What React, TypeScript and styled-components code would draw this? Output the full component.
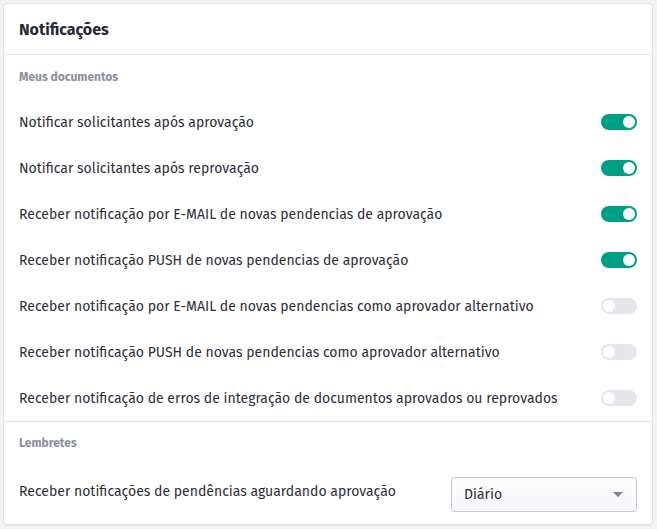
import React from 'react'
import styled, { createGlobalStyle } from 'styled-components'

const GlobalStyle = createGlobalStyle`
  html, body {
    margin: 0;
    padding: 0;
    background: #f3f3f5;
  }
  body {
    font-family: 'Fira Sans', 'Roboto', 'Liberation Sans', sans-serif;
    color: #2e2e3a;
  }
`

const Page = styled.div`
  padding: 3px 4px 4px 3px;
`

const Card = styled.div`
  background: #ffffff;
  border: 1px solid #e3e3e8;
  border-radius: 4px;
  box-shadow: 0 1px 2px rgba(20, 20, 40, 0.06);
  overflow: hidden;
`

const Header = styled.div`
  height: 50px;
  display: flex;
  align-items: center;
  padding: 0 15px;
  border-bottom: 1px solid #e3e3e8;
`

const Title = styled.h1`
  margin: 0;
  font-size: 16px;
  font-weight: 700;
  color: #2a2a38;
`

const Section = styled.div<{ $last?: boolean }>`
  padding: 14px 15px ${p => (p.$last ? '7px' : '0')};
  & + & {
    border-top: 1px solid #e3e3e8;
    padding-top: 13px;
  }
`

const SectionLabel = styled.div`
  font-size: 12px;
  line-height: 16px;
  font-weight: 700;
  color: #8c90a3;
  margin-bottom: 14px;
`

const Row = styled.div<{ $tall?: boolean }>`
  height: ${p => (p.$tall ? '52px' : '46px')};
  display: flex;
  align-items: center;
  justify-content: space-between;
`

const RowText = styled.span`
  font-size: 14px;
  color: #2e2e3a;
`

const Toggle = styled.button<{ $on: boolean }>`
  position: relative;
  width: 36px;
  height: 16px;
  border: none;
  padding: 0;
  border-radius: 8px;
  cursor: pointer;
  background: ${p => (p.$on ? '#009e85' : '#e6e6ec')};
  &::after {
    content: '';
    position: absolute;
    top: 2px;
    left: ${p => (p.$on ? '22px' : '2px')};
    width: 12px;
    height: 12px;
    border-radius: 50%;
    background: #ffffff;
  }
`

const Select = styled.div`
  width: 186px;
  height: 35px;
  margin-top: 6px;
  box-sizing: border-box;
  border: 1px solid #c9c9d6;
  border-radius: 3px;
  background: linear-gradient(#fdfdfe, #f6f6f9);
  display: flex;
  align-items: center;
  justify-content: space-between;
  padding: 0 13px 0 12px;
  font-size: 14px;
  color: #2e2e3a;
`

const Caret = styled.span`
  width: 0;
  height: 0;
  border-left: 5px solid transparent;
  border-right: 5px solid transparent;
  border-top: 5px solid #7c7f8e;
`

const documentos = [
  { label: 'Notificar solicitantes após aprovação', on: true },
  { label: 'Notificar solicitantes após reprovação', on: true },
  { label: 'Receber notificação por E-MAIL de novas pendencias de aprovação', on: true },
  { label: 'Receber notificação PUSH de novas pendencias de aprovação', on: true },
  { label: 'Receber notificação por E-MAIL de novas pendencias como aprovador alternativo', on: false },
  { label: 'Receber notificação PUSH de novas pendencias como aprovador alternativo', on: false },
  { label: 'Receber notificação de erros de integração de documentos aprovados ou reprovados', on: false },
]

const App: React.FunctionComponent = () => {
  const [items, setItems] = React.useState(documentos)

  const toggle = (i: number) => {
    setItems(items.map((it, idx) => (idx === i ? { ...it, on: !it.on } : it)))
  }

  return (
    <>
      <GlobalStyle />
      <Page>
        <Card>
          <Header>
            <Title>Notificações</Title>
          </Header>
          <Section>
            <SectionLabel>Meus documentos</SectionLabel>
            {items.map((it, i) => (
              <Row key={it.label}>
                <RowText>{it.label}</RowText>
                <Toggle $on={it.on} onClick={() => toggle(i)} aria-label={it.label} />
              </Row>
            ))}
          </Section>
          <Section $last>
            <SectionLabel>Lembretes</SectionLabel>
            <Row $tall>
              <RowText>Receber notificações de pendências aguardando aprovação</RowText>
              <Select>
                Diário
                <Caret />
              </Select>
            </Row>
          </Section>
        </Card>
      </Page>
    </>
  )
}

export default App
